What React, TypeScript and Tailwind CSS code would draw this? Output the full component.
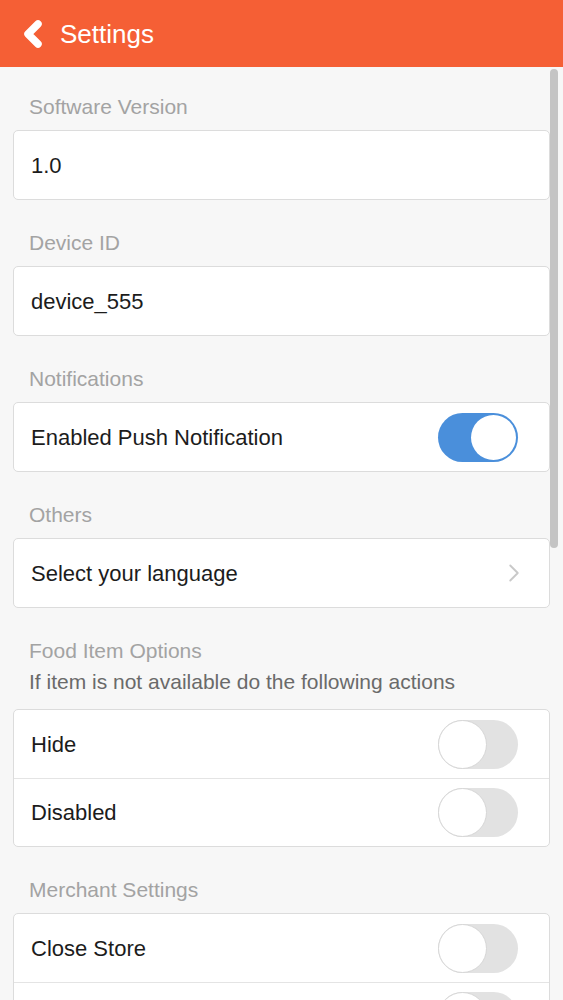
import { ChevronLeft, ChevronRight } from "lucide-react"

function Toggle({ on }: { on?: boolean }) {
  return on ? (
    <div className="flex h-[49px] w-[80px] items-center justify-end rounded-full bg-[#4a8fdb] p-[2px]">
      <div className="h-[45px] w-[45px] rounded-full bg-white" />
    </div>
  ) : (
    <div className="flex h-[49px] w-[80px] items-center rounded-full bg-[#e2e2e2]">
      <div className="h-[49px] w-[49px] rounded-full border border-[#d6d6d6] bg-white" />
    </div>
  )
}

function Label({ children, first }: { children: React.ReactNode; first?: boolean }) {
  return (
    <div
      className={`px-[29px] text-[21px] leading-[26px] text-[#a3a3a3] ${first ? "pt-[27px]" : "pt-[30px]"} pb-[10px]`}
    >
      {children}
    </div>
  )
}

function Row({ children, right, divider }: { children?: React.ReactNode; right?: React.ReactNode; divider?: boolean }) {
  return (
    <div
      className={`flex h-[68px] items-center justify-between pl-[17px] pr-[31px] ${divider ? "border-t border-[#e4e4e4]" : ""}`}
    >
      <span className="text-[22px] text-[#1c1c1c]">{children}</span>
      {right}
    </div>
  )
}

function Card({ children }: { children: React.ReactNode }) {
  return <div className="mx-[13px] rounded-[5px] border border-[#dcdcdc] bg-white">{children}</div>
}

export default function App() {
  return (
    <div
      className="relative flex h-screen flex-col overflow-hidden bg-[#f7f7f7]"
      style={{ fontFamily: '"Liberation Sans", Arial, sans-serif' }}
    >
      {/* Header */}
      <header className="flex h-[67px] shrink-0 items-center bg-[#f55f35] pl-[13px] text-white">
        <ChevronLeft className="h-[40px] w-[40px]" strokeWidth={4.5} />
        <h1 className="ml-[7px] text-[26px] leading-none">Settings</h1>
      </header>

      <div className="flex-1">
        <Label first>Software Version</Label>
        <Card>
          <Row>1.0</Row>
        </Card>

        <Label>Device ID</Label>
        <Card>
          <Row>device_555</Row>
        </Card>

        <Label>Notifications</Label>
        <Card>
          <Row right={<Toggle on />}>Enabled Push Notification</Row>
        </Card>

        <Label>Others</Label>
        <Card>
          <Row right={<ChevronRight className="mr-[-11px] h-[30px] w-[30px] text-[#c9c9c9]" strokeWidth={1.5} />}>
            Select your language
          </Row>
        </Card>

        <div className="px-[29px] pt-[27px] pb-[12px] text-[21px] leading-[31px]">
          <div className="text-[#a3a3a3]">Food Item Options</div>
          <div className="text-[#6a6a6a]">If item is not available do the following actions</div>
        </div>
        <Card>
          <Row right={<Toggle />}>Hide</Row>
          <Row right={<Toggle />} divider>
            Disabled
          </Row>
        </Card>

        <Label>Merchant Settings</Label>
        <Card>
          <Row right={<Toggle />}>Close Store</Row>
          <Row right={<Toggle />} divider />
        </Card>
      </div>

      {/* scroll indicator */}
      <div className="absolute right-[5px] top-[69px] h-[479px] w-[8px] rounded-full bg-[#c4c4c4]" />
    </div>
  )
}
